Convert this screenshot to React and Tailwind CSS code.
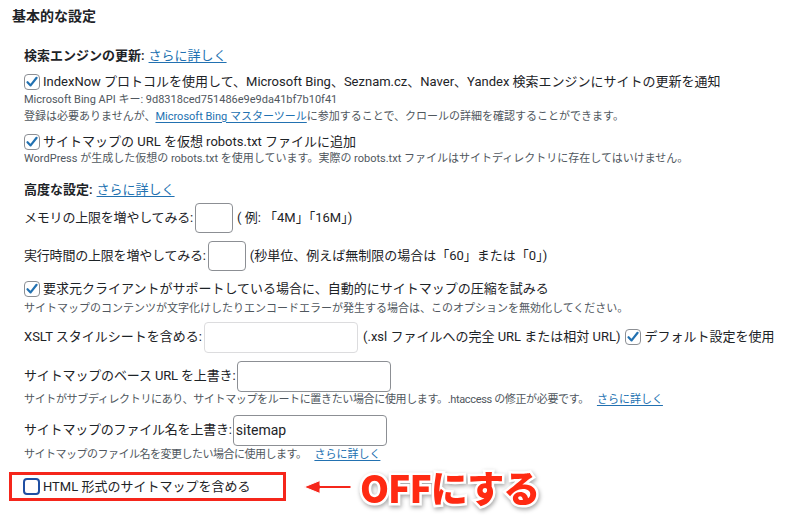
import React from "react";

const font = { fontFamily: 'Roboto, "Noto Sans CJK JP", sans-serif' };

function Check({ on }) {
  return on ? (
    <span className="inline-flex w-[16px] h-[16px] shrink-0 items-center justify-center rounded-[4px] border border-[#8c8f94] bg-white">
      <svg width="14" height="14" viewBox="0 0 14 14">
        <path d="M2.5 7.2 L5.6 10.4 L11.6 2.8" fill="none" stroke="#2271b1" strokeWidth="2.2" strokeLinecap="round" strokeLinejoin="round" />
      </svg>
    </span>
  ) : (
    <span className="inline-block w-[17px] h-[17px] shrink-0 rounded-[4px] border-2 border-[#1f4fa3] bg-white"></span>
  );
}

function Link({ children }) {
  return <a className="text-[#2271b1] underline underline-offset-2 cursor-pointer">{children}</a>;
}

export default function App() {
  return (
    <div className="w-[800px] h-[520px] bg-white text-[#1d2327] overflow-hidden relative" style={font}>
      <div className="flex flex-col">
        <div className="h-[32px] flex items-center pl-[12px] text-[14px] font-bold">基本的な設定</div>

        <div className="pl-[24px] flex flex-col">
          <div className="mt-[12px] h-[24px] flex items-center text-[13px]">
            <span className="font-semibold mr-[4px]">検索エンジンの更新:</span>
            <Link>さらに詳しく</Link>
          </div>
          <div className="mt-[4px] h-[20px] flex items-center gap-[3px] text-[13px]">
            <Check on />
            <span>IndexNow プロトコルを使用して、Microsoft Bing、Seznam.cz、Naver、Yandex 検索エンジンにサイトの更新を通知</span>
          </div>
          <div className="h-[16px] flex items-center text-[11px] text-[#50575e]">Microsoft Bing API キー: 9d8318ced751486e9e9da41bf7b10f41</div>
          <div className="mt-[1px] h-[16px] flex items-center text-[11px] text-[#50575e]">
            登録は必要ありませんが、<Link>Microsoft Bing マスターツール</Link>に参加することで、クロールの詳細を確認することができます。
          </div>
          <div className="mt-[8px] h-[18px] flex items-center gap-[3px] text-[13px]">
            <Check on />
            <span>サイトマップの URL を仮想 robots.txt ファイルに追加</span>
          </div>
          <div className="h-[16px] flex items-center text-[11px] text-[#50575e]">WordPress が生成した仮想の robots.txt を使用しています。実際の robots.txt ファイルはサイトディレクトリに存在してはいけません。</div>

          <div className="mt-[13px] h-[20px] flex items-center text-[13px]">
            <span className="font-semibold mr-[4px]">高度な設定:</span>
            <Link>さらに詳しく</Link>
          </div>
          <div className="mt-[3px] h-[30px] flex items-center text-[13px]">
            <span className="tracking-[-0.2px]">メモリの上限を増やしてみる:</span>
            <span className="ml-[2px] w-[38px] h-[30px] rounded-[4px] border border-[#8c8f94] bg-white"></span>
            <span className="ml-[4px]">( 例: 「4M」「16M」)</span>
          </div>
          <div className="mt-[8px] h-[30px] flex items-center text-[13px]">
            <span className="tracking-[-0.2px]">実行時間の上限を増やしてみる:</span>
            <span className="ml-[2px] w-[38px] h-[30px] rounded-[4px] border border-[#8c8f94] bg-white"></span>
            <span className="ml-[4px]">(秒単位、例えば無制限の場合は「60」または「0」)</span>
          </div>
          <div className="mt-[8px] h-[20px] flex items-center gap-[3px] text-[13px]">
            <Check on />
            <span>要求元クライアントがサポートしている場合に、自動的にサイトマップの圧縮を試みる</span>
          </div>
          <div className="mt-[2px] h-[16px] flex items-center text-[11px] text-[#50575e]">サイトマップのコンテンツが文字化けしたりエンコードエラーが発生する場合は、このオプションを無効化してください。</div>

          <div className="mt-[4px] h-[32px] flex items-center text-[13px]">
            <span>XSLT スタイルシートを含める:</span>
            <span className="ml-[2px] w-[154px] h-[31px] rounded-[4px] border border-[#dcdcde] bg-white"></span>
            <span className="ml-[5px]">(.xsl ファイルへの完全 URL または相対 URL)</span>
            <span className="ml-[4px] mr-[4px] flex"><Check on /></span>
            <span>デフォルト設定を使用</span>
          </div>
          <div className="mt-[7px] h-[32px] flex items-center text-[13px]">
            <span className="tracking-[-0.15px]">サイトマップのベース URL を上書き:</span>
            <span className="ml-[2px] w-[154px] h-[31px] rounded-[4px] border border-[#8c8f94] bg-white"></span>
          </div>
          <div className="h-[16px] flex items-center text-[11px] text-[#50575e]">
            <span className="tracking-[-0.35px]">サイトがサブディレクトリにあり、サイトマップをルートに置きたい場合に使用します。.htaccess の修正が必要です。</span>
            <span className="ml-[8px]"><Link>さらに詳しく</Link></span>
          </div>
          <div className="mt-[6px] h-[32px] flex items-center text-[13px]">
            <span className="tracking-[-0.2px]">サイトマップのファイル名を上書き:</span>
            <span className="ml-[1px] w-[154px] h-[31px] rounded-[4px] border border-[#8c8f94] bg-white flex items-center pl-[2px] text-[14px]">sitemap</span>
          </div>
          <div className="mt-[1px] h-[16px] flex items-center text-[11px] text-[#50575e]">
            <span className="tracking-[-0.5px]">サイトマップのファイル名を変更したい場合に使用します。</span>
            <span className="ml-[8px]"><Link>さらに詳しく</Link></span>
          </div>
        </div>

        <div className="mt-[4px] flex items-center">
          <div className="ml-[9px] w-[277px] h-[29px] border-[3px] border-[#f5261b] flex items-center pl-[11px] gap-[3px] text-[13px]">
            <Check on={false} />
            <span>HTML 形式のサイトマップを含める</span>
          </div>
          <svg className="ml-[17px]" width="50" height="20" viewBox="0 0 50 20">
            <path d="M48 8.5 H17 V3.5 L1 10 L17 16.5 V11.5 H48 Z" fill="#f5261b" stroke="#fff" strokeWidth="1" />
          </svg>
          <span
            className="ml-[7px] mt-[2px] text-[37px] leading-none font-black text-[#ff2a12] [-webkit-text-stroke:5px_white] [paint-order:stroke_fill] drop-shadow-[1px_2px_2px_rgba(0,0,0,0.35)] tracking-[-1px]"
            style={{ fontFamily: '"Noto Sans CJK JP", sans-serif' }}
          >
            OFFにする
          </span>
        </div>
      </div>
    </div>
  );
}
